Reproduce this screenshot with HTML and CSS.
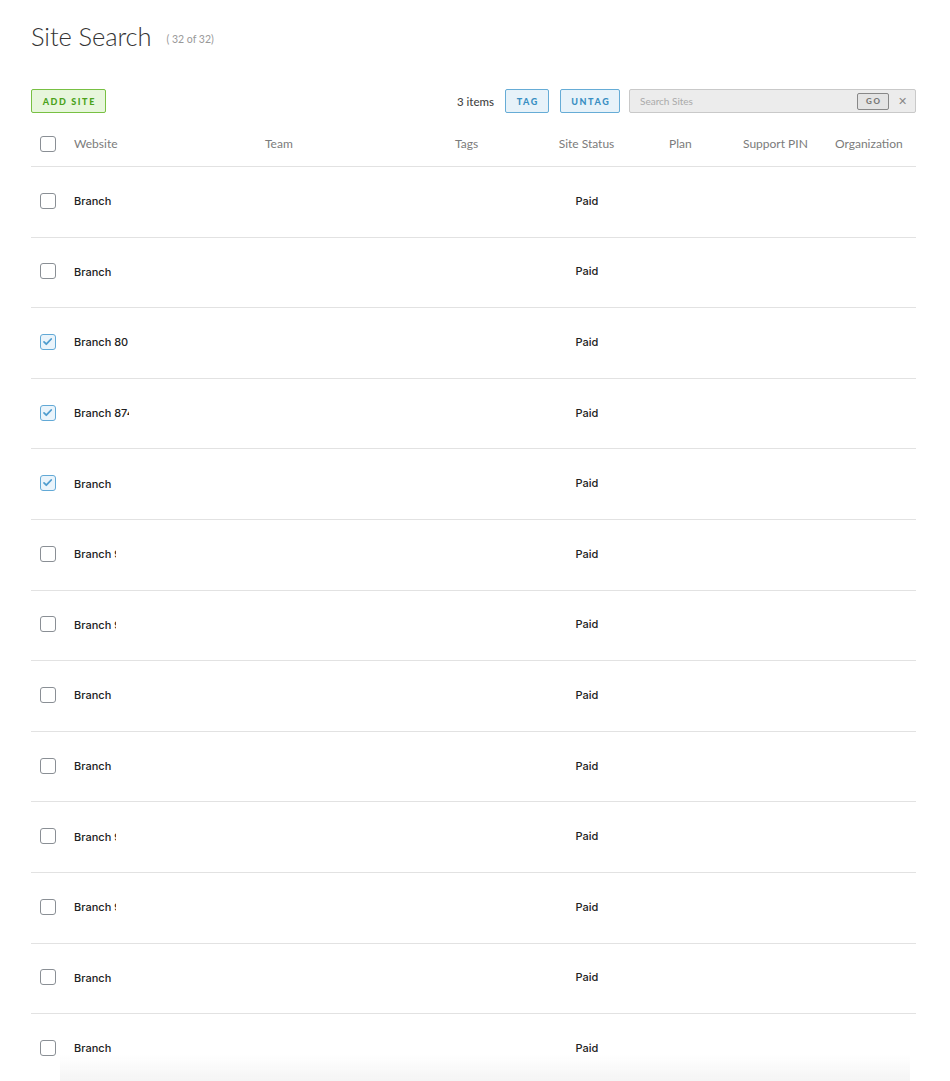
FILE: index.html
```html
<!DOCTYPE html>
<html>
<head>
<meta charset="utf-8">
<link rel="stylesheet" href="styles.css">
</head>
<body>
<div class="page">
  <div class="title-row">
    <h1 class="title">Site Search</h1>
    <span class="count">( 32 of 32)</span>
  </div>

  <div class="toolbar">
    <button class="btn btn-green">ADD SITE</button>
    <div class="toolbar-right">
      <span class="items">3 items</span>
      <button class="btn btn-blue">TAG</button>
      <button class="btn btn-blue btn-untag">UNTAG</button>
      <div class="search">
        <span class="search-ph">Search Sites</span>
        <button class="go">GO</button>
        <span class="clear">&#x2715;</span>
      </div>
    </div>
  </div>

  <div class="table">
    <div class="row head">
      <div class="cell"><span class="cb"></span></div>
      <div class="cell">Website</div>
      <div class="cell">Team</div>
      <div class="cell">Tags</div>
      <div class="cell status"><span class="status-in">Site Status</span></div>
      <div class="cell">Plan</div>
      <div class="cell">Support PIN</div>
      <div class="cell">Organization</div>
    </div>

    <div class="row"><div class="cell"><span class="cb"></span></div><div class="cell name"><span class="clip c6">Branch</span></div><div class="cell"></div><div class="cell"></div><div class="cell status"><span class="status-in">Paid</span></div><div class="cell"></div><div class="cell"></div><div class="cell"></div></div>
    <div class="row"><div class="cell"><span class="cb"></span></div><div class="cell name"><span class="clip c6">Branch</span></div><div class="cell"></div><div class="cell"></div><div class="cell status"><span class="status-in">Paid</span></div><div class="cell"></div><div class="cell"></div><div class="cell"></div></div>
    <div class="row"><div class="cell"><span class="cb on"><svg viewBox="0 0 13 13"><path d="M3 6.9l2.3 2.3L10.2 4"/></svg></span></div><div class="cell name"><span class="clip c9">Branch 80</span></div><div class="cell"></div><div class="cell"></div><div class="cell status"><span class="status-in">Paid</span></div><div class="cell"></div><div class="cell"></div><div class="cell"></div></div>
    <div class="row"><div class="cell"><span class="cb on"><svg viewBox="0 0 13 13"><path d="M3 6.9l2.3 2.3L10.2 4"/></svg></span></div><div class="cell name"><span class="clip c9">Branch 874</span></div><div class="cell"></div><div class="cell"></div><div class="cell status"><span class="status-in">Paid</span></div><div class="cell"></div><div class="cell"></div><div class="cell"></div></div>
    <div class="row"><div class="cell"><span class="cb on"><svg viewBox="0 0 13 13"><path d="M3 6.9l2.3 2.3L10.2 4"/></svg></span></div><div class="cell name"><span class="clip c6">Branch</span></div><div class="cell"></div><div class="cell"></div><div class="cell status"><span class="status-in">Paid</span></div><div class="cell"></div><div class="cell"></div><div class="cell"></div></div>
    <div class="row"><div class="cell"><span class="cb"></span></div><div class="cell name"><span class="clip c7">Branch 9</span></div><div class="cell"></div><div class="cell"></div><div class="cell status"><span class="status-in">Paid</span></div><div class="cell"></div><div class="cell"></div><div class="cell"></div></div>
    <div class="row"><div class="cell"><span class="cb"></span></div><div class="cell name"><span class="clip c7">Branch 9</span></div><div class="cell"></div><div class="cell"></div><div class="cell status"><span class="status-in">Paid</span></div><div class="cell"></div><div class="cell"></div><div class="cell"></div></div>
    <div class="row"><div class="cell"><span class="cb"></span></div><div class="cell name"><span class="clip c6">Branch</span></div><div class="cell"></div><div class="cell"></div><div class="cell status"><span class="status-in">Paid</span></div><div class="cell"></div><div class="cell"></div><div class="cell"></div></div>
    <div class="row"><div class="cell"><span class="cb"></span></div><div class="cell name"><span class="clip c6">Branch</span></div><div class="cell"></div><div class="cell"></div><div class="cell status"><span class="status-in">Paid</span></div><div class="cell"></div><div class="cell"></div><div class="cell"></div></div>
    <div class="row"><div class="cell"><span class="cb"></span></div><div class="cell name"><span class="clip c7">Branch 9</span></div><div class="cell"></div><div class="cell"></div><div class="cell status"><span class="status-in">Paid</span></div><div class="cell"></div><div class="cell"></div><div class="cell"></div></div>
    <div class="row"><div class="cell"><span class="cb"></span></div><div class="cell name"><span class="clip c7">Branch 9</span></div><div class="cell"></div><div class="cell"></div><div class="cell status"><span class="status-in">Paid</span></div><div class="cell"></div><div class="cell"></div><div class="cell"></div></div>
    <div class="row"><div class="cell"><span class="cb"></span></div><div class="cell name"><span class="clip c6">Branch</span></div><div class="cell"></div><div class="cell"></div><div class="cell status"><span class="status-in">Paid</span></div><div class="cell"></div><div class="cell"></div><div class="cell"></div></div>
    <div class="row"><div class="cell"><span class="cb"></span></div><div class="cell name"><span class="clip c6">Branch</span></div><div class="cell"></div><div class="cell"></div><div class="cell status"><span class="status-in">Paid</span></div><div class="cell"></div><div class="cell"></div><div class="cell"></div></div>
  </div>
</div>
<div class="bottom-fade"></div>
</body>
</html>
```

FILE: styles.css
```css
* { box-sizing: border-box; }
html, body { margin: 0; padding: 0; background: #fff; }
body {
  font-family: Lato, "Liberation Sans", sans-serif;
  color: #222;
  overflow: hidden;
  height: 1081px;
}
.page {
  padding: 21px 34px 0 31px;
}
.title-row {
  display: flex;
  align-items: center;
  height: 30px;
}
.title {
  margin: 0;
  font-size: 25.5px;
  font-weight: 300;
  color: #333;
  letter-spacing: -0.1px;
  line-height: 30px;
}
.count {
  margin-left: 15px;
  margin-top: 6px;
  font-size: 10.5px;
  color: #999;
}
.toolbar {
  display: flex;
  align-items: center;
  justify-content: space-between;
  margin-top: 38px;
  height: 24px;
}
.toolbar-right {
  display: flex;
  align-items: center;
}
.btn {
  height: 24px;
  font-family: inherit;
  font-size: 9px;
  font-weight: 900;
  letter-spacing: 1.6px;
  border-radius: 2px;
  padding: 0 0 0 1.6px;
  cursor: pointer;
}
.btn-green {
  width: 75px;
  background: #e7f6dc;
  border: 1px solid #78c043;
  color: #4aa21a;
}
.btn-blue {
  width: 44px;
  background: #e7f2f9;
  border: 1px solid #66acd6;
  color: #3a8fc3;
}
.btn-untag { width: 60px; margin-left: 11px; }
.items {
  font-size: 11.5px;
  color: #444;
  margin-right: 11px;
  font-weight: 500;
}
.search {
  margin-left: 9px;
  width: 287px;
  height: 24px;
  background: #ececec;
  border: 1px solid #c9c9c9;
  border-radius: 2px;
  display: flex;
  align-items: center;
  padding-left: 10px;
}
.search-ph {
  flex: 1;
  font-size: 10px;
  color: #aaa;
}
.go {
  width: 32px;
  height: 17px;
  background: #e4e4e4;
  border: 1px solid #888;
  border-radius: 2px;
  font-family: inherit;
  font-size: 8px;
  font-weight: 900;
  letter-spacing: 1.6px;
  color: #777;
  padding: 0 0 0 1.6px;
}
.clear {
  width: 26px;
  text-align: center;
  font-size: 11px;
  color: #888;
}

.table { margin-top: 10px; }
.row {
  display: grid;
  grid-template-columns: 43px 191px 190px 103px 111px 74px 92px 1fr;
  align-items: center;
  height: 70.6px;
  border-bottom: 1px solid #e2e2e2;
}
.row.head {
  height: 44px;
  font-size: 12px;
  color: #7b7b7b;
}
.row.head .cell { padding-bottom: 2px; }
.cell { white-space: nowrap; }
.status-in {
  display: inline-block;
  width: 57px;
  text-align: center;
}
.row:not(.head) .cell {
  font-family: Inter, Lato, sans-serif;
  font-size: 11px;
  font-weight: 500;
  color: #222;
  padding-bottom: 2px;
}
.row:not(.head) .status-in { padding-left: 1px; }
.clip {
  display: inline-block;
  overflow: hidden;
  vertical-align: middle;
}
.c6 { width: 40px; }
.c7 { width: 42px; }
.c9 { width: 55px; }

.cb {
  display: block;
  width: 16px;
  height: 16px;
  margin-left: 9px;
  border: 1.5px solid #8a8f95;
  border-radius: 3px;
  background: #fff;
}
.cb.on {
  border-color: #62a9d6;
  background: #eaf4fb;
}
.cb svg {
  display: block;
  width: 13px;
  height: 13px;
}
.cb svg path {
  fill: none;
  stroke: #4f9dcf;
  stroke-width: 1.8;
  stroke-linecap: round;
  stroke-linejoin: round;
}
.bottom-fade {
  position: fixed;
  left: 60px;
  right: 40px;
  bottom: 0;
  height: 26px;
  background: linear-gradient(to bottom, rgba(240,240,240,0), rgba(238,238,238,0.6));
  pointer-events: none;
}
```
